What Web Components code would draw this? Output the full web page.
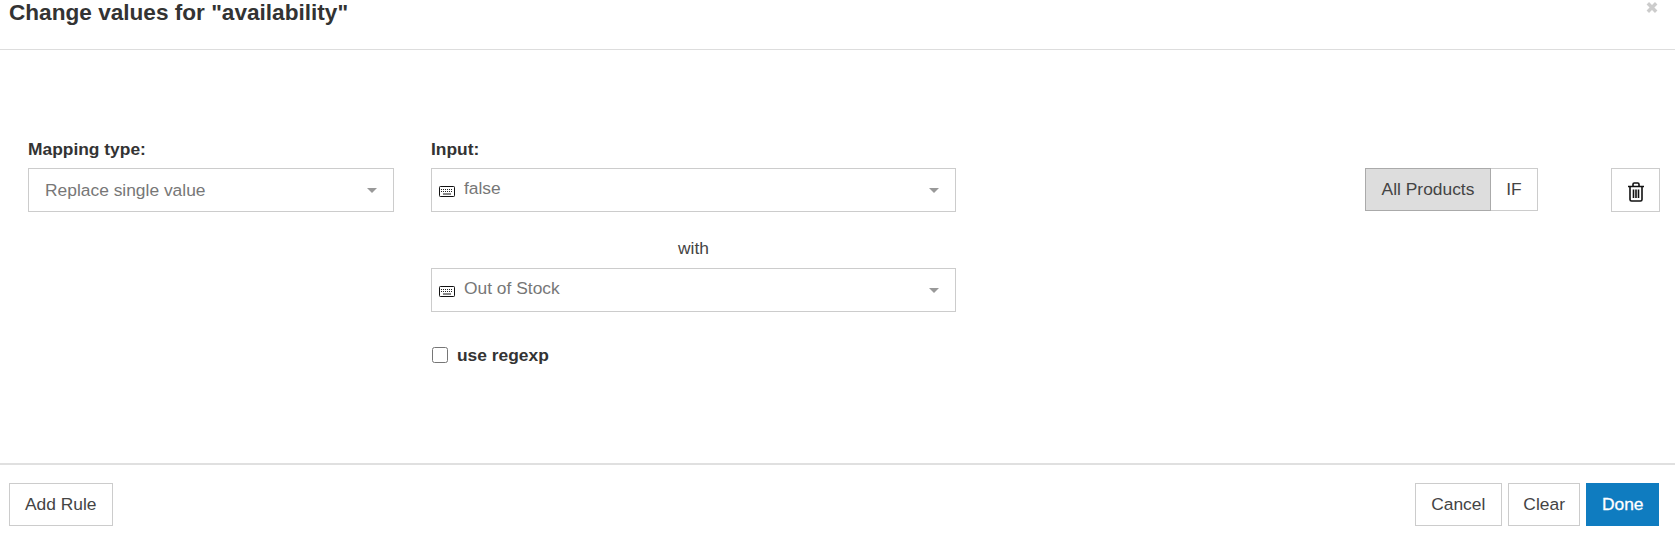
<!DOCTYPE html>
<html><head><meta charset="utf-8"><title>Change values</title>
<style>html,body{margin:0;padding:0;background:#fff;height:100%;overflow:hidden}body{font-family:"Liberation Sans",Arial,sans-serif;color:#333}</style>
</head><body>
<mapping-dialog></mapping-dialog>
<script>
const S=`*{box-sizing:border-box}`;
function def(name,html,setup){customElements.define(name,class extends HTMLElement{constructor(){super();this.attachShadow({mode:'open'}).innerHTML=html;}connectedCallback(){setup&&setup(this);}});}
def('ui-button',`<style>${S}:host{display:inline-flex}
button{font:17.4px/1 "Liberation Sans",Arial,sans-serif;height:43px;padding:0 var(--px,15px);border:1px solid #ccc;background:#fff;color:#444;display:flex;align-items:center;justify-content:center}
:host([primary]) button{background:#0f7cc0;border-color:#0f7cc0;color:#fff;-webkit-text-stroke:.3px #fff}
</style><button><slot></slot></button>`);
def('kb-icon',`<style>:host{display:inline-flex}</style><svg width="16" height="11" viewBox="0 0 16 11"><rect x=".5" y=".5" width="15" height="10" rx=".8" fill="#fff" stroke="#111"/><path d="M2 3.500h12M2 5.500h12" stroke="#222" stroke-dasharray="1 1" fill="none"/><path d="M4 8h8" stroke="#111" fill="none"/></svg>`);
def('ui-select',`<style>${S}:host{display:block}
.b{height:44px;border:1px solid #ccc;background:#fff;display:flex;align-items:center;font-size:17.4px;color:#777;padding:0 16px 0 var(--pl,16px)}
.t{flex:1;white-space:nowrap;padding-bottom:var(--tb,0)}.c{width:0;height:0;border:5px solid transparent;border-top:5px solid #999;border-bottom:0}
::slotted(kb-icon){margin-right:9px;margin-top:2px}
</style><div class="b"><slot name="icon"></slot><span class="t"><slot></slot></span><i class="c"></i></div>`);
def('ui-field',`<style>${S}:host{display:block}
label{display:block;font:700 17.4px/20px "Liberation Sans",Arial,sans-serif;color:#333;margin-bottom:9px}
</style><label><slot name="label"></slot></label><slot></slot>`);
def('scope-toggle',`<style>${S}:host{display:flex;font-size:17.4px}
div{height:43px;display:flex;align-items:center;justify-content:center;border:1px solid #ccc;color:#444}
.a{width:126px;background:#ddd;border-color:#aaa}.i{width:47px;border-left:0}
</style><div class="a">All Products</div><div class="i">IF</div>`);
def('trash-button',`<style>${S}:host{display:flex}
div{width:49px;height:44px;border:1px solid #ccc;display:flex;align-items:center;justify-content:center;padding-top:3px}
</style><div><svg width="16" height="20" viewBox="0 0 16 20" fill="none" stroke="#111"><path stroke-width="1.6" d="M0 4.500h16M5 4.200V2.300Q5 1 6.300 1h3.400Q11 1 11 2.300V4.200M2 4.500V17.500Q2 19 3.500 19h9Q14 19 14 17.500V4.500"/><path stroke-width="1.600" d="M5.500 7.500v8.500M8 7.500v8.500M10.500 7.500v8.500"/></svg></div>`);
def('mapping-rule',`<style>${S}:host{display:grid;grid-template-columns:366px 525px 1fr 49px;column-gap:37px;padding:0 15px 0 28px}
.m{display:flex;flex-direction:column}.w{text-align:center;font-size:17.4px;line-height:20px;color:#444;margin:26px 0 10px}
.r{display:flex;align-items:center;margin-top:33px;font:700 17.4px/20px "Liberation Sans",Arial,sans-serif;color:#333}
input{width:16px;height:16px;margin:0 9px 0 1px}
.s{display:flex;justify-content:flex-end;margin-top:29px;padding-right:36px}.d{margin-top:29px}
</style>
<ui-field><span slot="label">Mapping type:</span><ui-select>Replace single value</ui-select></ui-field>
<div class="m"><ui-field><span slot="label">Input:</span><ui-select style="--pl:7px;--tb:3px"><kb-icon slot="icon"></kb-icon>false</ui-select></ui-field>
<div class="w">with</div><ui-select style="--pl:7px;--tb:3px"><kb-icon slot="icon"></kb-icon>Out of Stock</ui-select>
<div class="r"><input type="checkbox"><span>use regexp</span></div></div>
<div class="s"><scope-toggle></scope-toggle></div><div class="d"><trash-button></trash-button></div>`);
def('mapping-dialog',`<style>${S}:host{display:flex;flex-direction:column;height:536px;position:relative;background:#fff}
header{height:50px;border-bottom:1px solid #ddd;padding:0 0 0 9px;font:700 22.6px/25px "Liberation Sans",Arial,sans-serif;color:#333}
.x{position:absolute;right:17px;top:1px;display:block}
main{flex:1;padding-top:89px}
footer{height:73px;border-top:2px solid #e0e0e0;padding:18px 16px 0 9px;display:flex;gap:6px}
.sp{flex:1}
</style><header>Change values for "availability"</header><svg class="x" width="12" height="13" viewBox="0 0 12 13" aria-label="Close"><path d="M1.800 2.200L10.200 10.800M10.200 2.200L1.800 10.800" stroke="#ccc" stroke-width="3.400" fill="none"/></svg>
<main><mapping-rule></mapping-rule></main>
<footer><ui-button>Add Rule</ui-button><span class="sp"></span><ui-button style="--px:15.5px">Cancel</ui-button><ui-button style="--px:14.5px">Clear</ui-button><ui-button primary style="--px:14.5px">Done</ui-button></footer>`);
</script>
</body></html>
